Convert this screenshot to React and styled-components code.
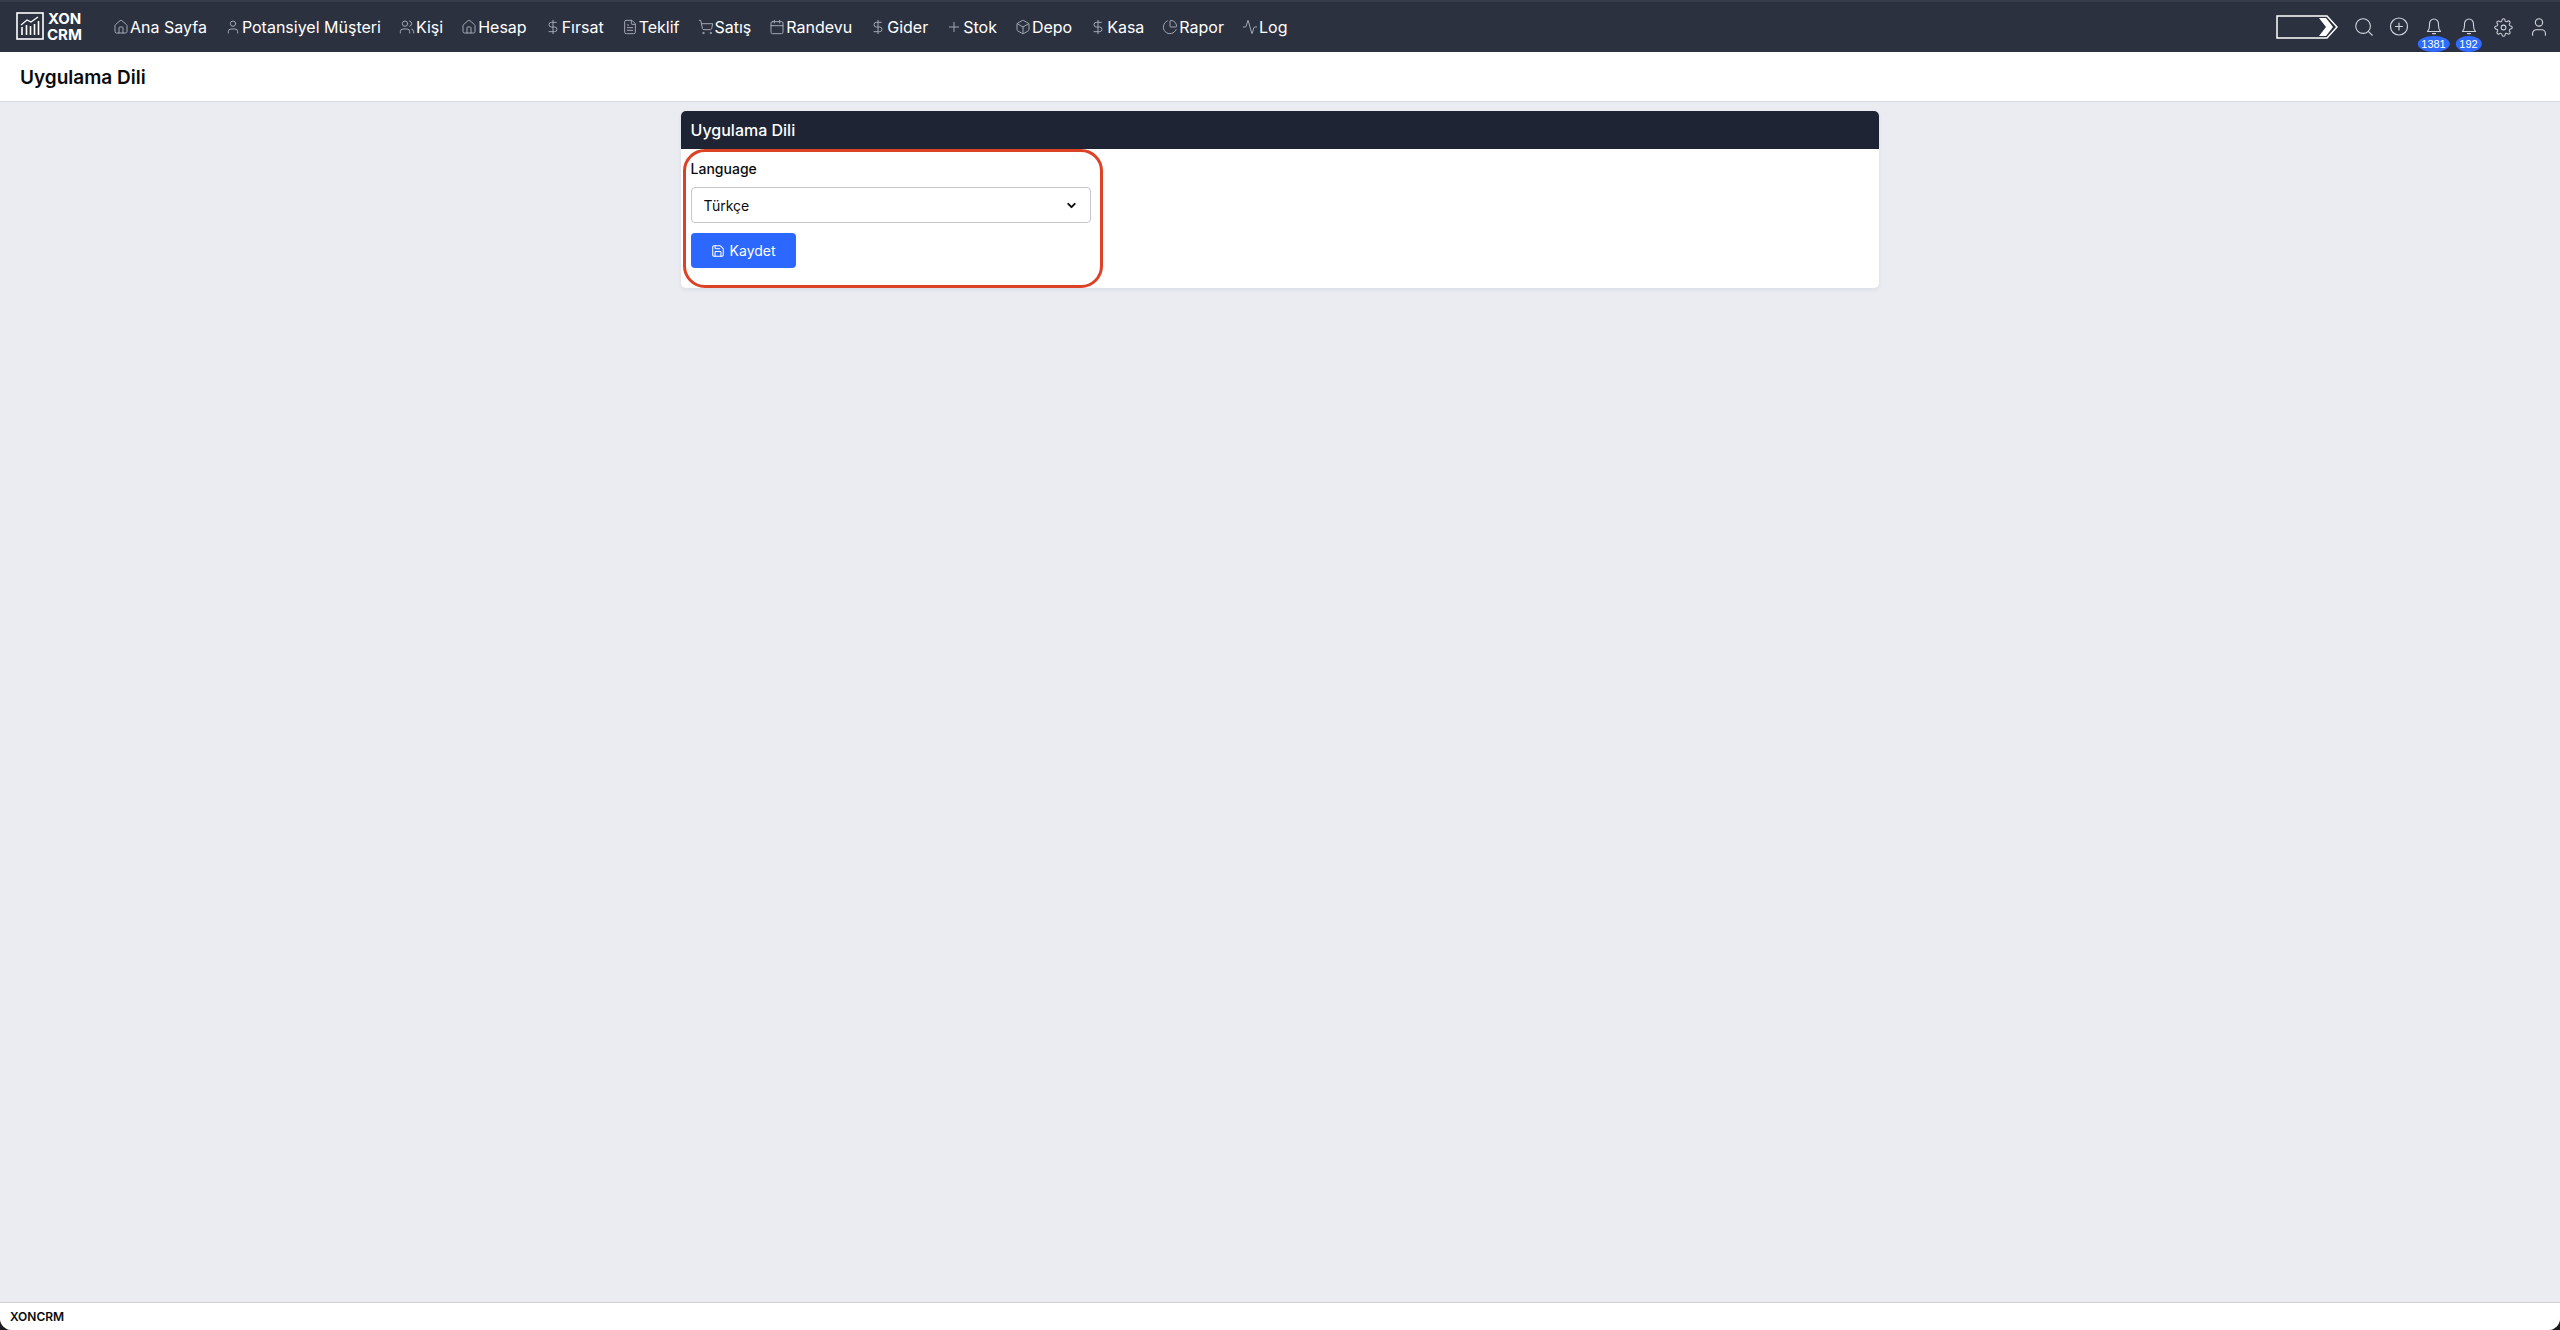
import React, { useState } from 'react';
import styled, { createGlobalStyle } from 'styled-components';
import {
  Activity,
  Box,
  Calendar,
  ChartPie,
  ChevronDown,
  DollarSign,
  FileText,
  House,
  Plus,
  Save,
  Search,
  ShoppingCart,
  User,
  Users,
} from 'lucide-react';
import { FiSettings } from 'react-icons/fi';

const GlobalStyle = createGlobalStyle`
  * {
    box-sizing: border-box;
  }

  body {
    margin: 0;
    background: #1d1c1e;
    color: #0b0b0d;
    font-family: Inter, "Liberation Sans", sans-serif;
    font-size: 14px;
  }
`;

const Page = styled.div`
  display: flex;
  flex-direction: column;
  min-height: 100vh;
  background: #eaecf2;
  border-radius: 0 0 12px 12px;
  overflow: hidden;
`;

const TopBar = styled.header`
  display: flex;
  align-items: center;
  height: 52px;
  padding: 0 4px 0 16px;
  border-top: 2px solid #373d4a;
  background: #2c3140;
`;

const Logo = styled.a`
  display: flex;
  margin-right: 19px;
`;

const Menu = styled.nav`
  display: flex;
  flex: 1;
`;

const MenuLink = styled.a`
  display: flex;
  align-items: center;
  gap: 1px;
  padding: 0 9px;
  color: #fff;
  font-size: 16px;
  line-height: 24px;
  white-space: nowrap;
  text-decoration: none;

  svg {
    flex: none;
    color: #a3a8b3;
  }
`;

const Tools = styled.div`
  display: flex;
  align-items: center;
`;

const Arrow = styled.a`
  display: flex;
  margin-right: 8px;
`;

const ToolButton = styled.button`
  position: relative;
  display: flex;
  align-items: center;
  justify-content: center;
  width: 35px;
  height: 22px;
  padding: 0;
  border: none;
  background: none;
  color: #d0d4dc;
  cursor: pointer;
`;

const Badge = styled.span`
  position: absolute;
  top: 20px;
  left: 50%;
  padding: 0 4px;
  border-radius: 50%;
  background: #2f6bff;
  color: #fff;
  font-size: 11px;
  line-height: 16px;
  transform: translateX(-50%);
`;

const TitleBar = styled.div`
  padding: 11px 20px 8px;
  border-bottom: 1px solid #d6d8e0;
  background: #fff;
`;

const PageTitle = styled.h1`
  margin: 0;
  font-size: 19px;
  font-weight: 600;
  line-height: 30px;
`;

const Content = styled.main`
  flex: 1;
  padding: 9px 10px;
`;

const Card = styled.section`
  width: 47.2%;
  min-width: 440px;
  margin: 0 auto;
  border-radius: 5px;
  background: #fff;
  box-shadow: 0 2px 4px rgba(30, 36, 50, 0.06);
`;

const CardTitle = styled.h2`
  margin: 0;
  padding: 7px 10px;
  border-radius: 5px 5px 0 0;
  background: #1e2433;
  color: #fff;
  font-size: 16px;
  font-weight: 500;
  line-height: 24px;
`;

const Form = styled.form`
  position: relative;
  width: 420px;
  padding: 10px 10px 20px;
`;

// Red frame drawn over the form
const Highlight = styled.div`
  position: absolute;
  inset: 0 -2px 0 2px;
  border: 3px solid #dc4226;
  border-radius: 22px;
  pointer-events: none;
`;

const Label = styled.label`
  display: block;
  margin-bottom: 8px;
  font-weight: 500;
  line-height: 20px;
`;

const SelectBox = styled.div`
  position: relative;
  margin-bottom: 10px;

  svg {
    position: absolute;
    top: 12px;
    right: 13px;
    pointer-events: none;
  }
`;

const Select = styled.select`
  width: 100%;
  height: 36px;
  padding: 0 12px;
  border: 1px solid #c6c6ca;
  border-radius: 4px;
  background: #fff;
  color: inherit;
  font: inherit;
  appearance: none;
`;

const SaveButton = styled.button`
  display: flex;
  align-items: center;
  gap: 5px;
  height: 35px;
  padding: 0 20px;
  border: none;
  border-radius: 4px;
  background: #2c68ff;
  color: #fff;
  font: inherit;
  cursor: pointer;
`;

const Footer = styled.footer`
  padding: 4px 10px 3px;
  border-top: 1px solid #cfcfd2;
  background: #fff;
  font-size: 12px;
  font-weight: 600;
  line-height: 20px;
`;

const LogoMark = () => (
  <svg width="69" height="36" viewBox="0 0 69 36" fill="none" stroke="#fff">
    <rect x="1" y="4" width="26" height="26" strokeWidth="1.6" />
    <path d="M6 26v-8M10.500 26V16M14.500 26v-9M18.500 26V15M22.500 26V12" strokeWidth="1.600" />
    <path d="M5 16l6-5 4 2 7-5" strokeWidth="1.300" />
    <g fill="#fff" stroke="none" fontFamily="Inter, sans-serif" fontSize="15" fontWeight="700">
      <text x="32" y="15">XON</text>
      <text x="31" y="31">CRM</text>
    </g>
  </svg>
);

const ArrowMark = () => (
  <svg width="62" height="24" viewBox="0 0 62 24" fill="none">
    <path d="M1 1h50l10 11-10 11H1z" stroke="#fff" strokeWidth="1.500" />
    <path d="M43 3h7l7 9-7 9h-7l7-9z" fill="#fff" />
  </svg>
);

const BellIcon = () => (
  <svg width="22" height="22" viewBox="0 0 22 22" fill="none" stroke="currentColor" strokeWidth="1.1" strokeLinecap="round" strokeLinejoin="round">
    <path d="M4.500 15.500c1.500-1.500 2-3.500 2-6V8a4.500 5 0 0 1 9 0v1.500c0 2.500.5 4.500 2 6z" />
    <path d="M9.500 17.600h3" />
  </svg>
);

const PlusCircleIcon = () => (
  <svg width="22" height="22" viewBox="0 0 22 22" fill="none" stroke="currentColor" strokeWidth="1.2" strokeLinecap="round">
    <circle cx="11" cy="10.500" r="8.500" />
    <path d="M11 7v7M7.500 10.500h7" />
  </svg>
);

const menu = [
  { label: 'Ana Sayfa', icon: House },
  { label: 'Potansiyel Müşteri', icon: User },
  { label: 'Kişi', icon: Users },
  { label: 'Hesap', icon: House },
  { label: 'Fırsat', icon: DollarSign },
  { label: 'Teklif', icon: FileText },
  { label: 'Satış', icon: ShoppingCart },
  { label: 'Randevu', icon: Calendar },
  { label: 'Gider', icon: DollarSign },
  { label: 'Stok', icon: Plus },
  { label: 'Depo', icon: Box },
  { label: 'Kasa', icon: DollarSign },
  { label: 'Rapor', icon: ChartPie },
  { label: 'Log', icon: Activity },
];

const tools = [
  { label: 'Ara', icon: <Search size={22} strokeWidth={1.2} /> },
  { label: 'Ekle', icon: <PlusCircleIcon /> },
  { label: 'Bildirimler', icon: <BellIcon />, count: 1381 },
  { label: 'Görevler', icon: <BellIcon />, count: 192 },
  { label: 'Ayarlar', icon: <FiSettings size={19} strokeWidth={1.3} /> },
  { label: 'Profil', icon: <User size={22} strokeWidth={1.2} /> },
];

const App = () => {
  const [language, setLanguage] = useState('tr');

  return (
    <>
      <GlobalStyle />
      <Page>
        <TopBar>
          <Logo href="#" aria-label="XON CRM"><LogoMark /></Logo>
          <Menu>
            {menu.map(({ label, icon: Icon }) => (
              <MenuLink href="#" key={label}>
                <Icon size={16} strokeWidth={1.5} />
                {label}
              </MenuLink>
            ))}
          </Menu>
          <Tools>
            <Arrow href="#" aria-label="Devam"><ArrowMark /></Arrow>
            {tools.map(({ label, icon, count }) => (
              <ToolButton type="button" key={label} aria-label={label}>
                {icon}
                {count && <Badge>{count}</Badge>}
              </ToolButton>
            ))}
          </Tools>
        </TopBar>

        <TitleBar>
          <PageTitle>Uygulama Dili</PageTitle>
        </TitleBar>

        <Content>
          <Card>
            <CardTitle>Uygulama Dili</CardTitle>
            <Form onSubmit={(e) => e.preventDefault()}>
              <Label htmlFor="language">Language</Label>
              <SelectBox>
                <Select id="language" value={language} onChange={(e) => setLanguage(e.target.value)}>
                  <option value="tr">Türkçe</option>
                  <option value="en">English</option>
                </Select>
                <ChevronDown size={13} strokeWidth={3.5} />
              </SelectBox>
              <SaveButton type="submit">
                <Save size={14} strokeWidth={1.8} />
                Kaydet
              </SaveButton>
              <Highlight />
            </Form>
          </Card>
        </Content>

        <Footer>XONCRM</Footer>
      </Page>
    </>
  );
};

export default App;
